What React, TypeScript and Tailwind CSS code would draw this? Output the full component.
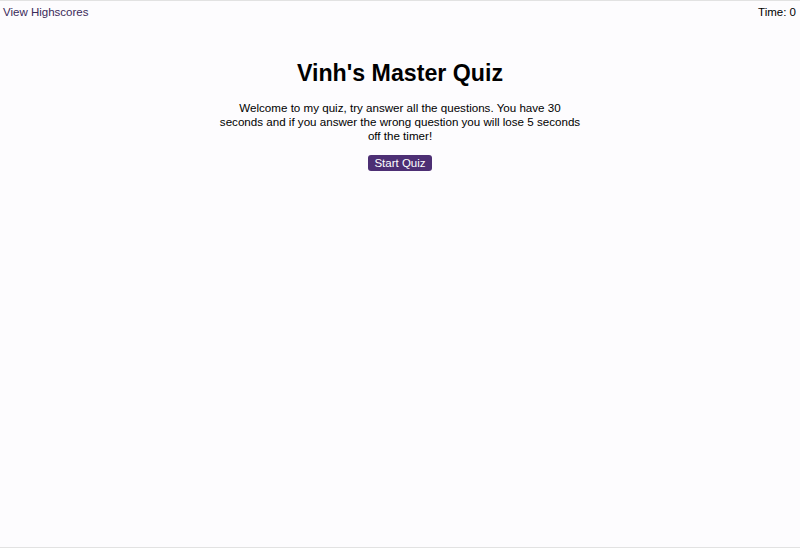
import React from 'react';

const App = () => {
  return (
    <div
      className="w-[800px] h-[548px] flex flex-col bg-[#fdfcfe] border-t border-b border-[#e2e2e2] text-black overflow-hidden"
      style={{ fontFamily: '"Liberation Sans", Arial, sans-serif' }}
    >
      {/* Header */}
      <header className="flex justify-between items-start px-[3px] pt-[4px] text-[11.5px] leading-[14px]">
        <a className="text-[#3b2a5a]">View Highscores</a>
        <span className="pr-[1px]">Time: 0</span>
      </header>

      {/* Intro */}
      <main className="flex flex-col items-center pt-[40px]">
        <h1 className="text-[23.2px] font-bold leading-[28px]">Vinh's Master Quiz</h1>
        <p className="w-[362px] mt-[14px] text-center text-[11.6px] leading-[14px]">
          Welcome to my quiz, try answer all the questions. You have 30 seconds and if you answer
          the wrong question you will lose 5 seconds off the timer!
        </p>
        <button className="mt-[12px] px-[6px] h-[16px] rounded-[3px] bg-[#4d2f74] text-white text-[11.5px] leading-[16px]">
          Start Quiz
        </button>
      </main>
    </div>
  );
};

export default App;
